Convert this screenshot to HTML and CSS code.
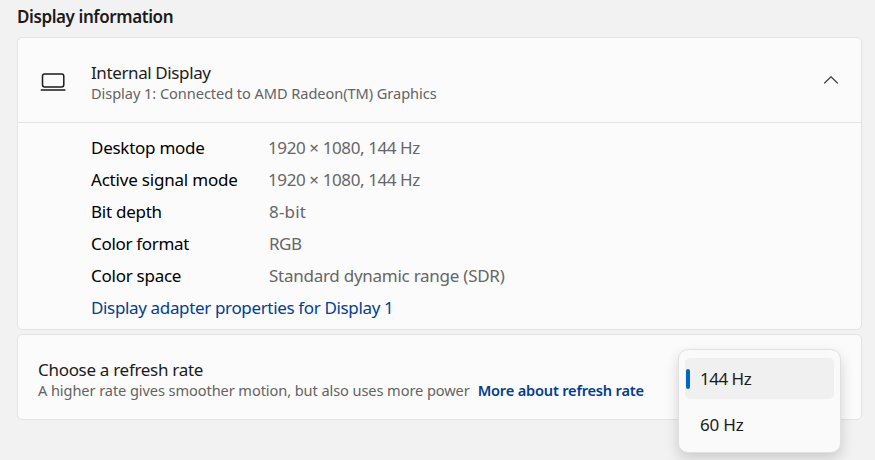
FILE: index.html
```html
<!DOCTYPE html>
<html lang="en">
<head>
<meta charset="utf-8">
<title>Advanced display</title>
<link rel="stylesheet" href="styles.css">
</head>
<body>
<main class="page">
  <h1 class="heading">Display information</h1>
  <section class="card">
    <header class="card-header">
      <svg class="laptop" width="26" height="20" viewBox="0 0 26 20" fill="none" stroke="#1b1b1b" stroke-width="1.5" stroke-linecap="round"><rect x="2.5" y="2" width="21.3" height="13" rx="2.2"/><path d="M1.3 18h23.6"/></svg>
      <div class="titles">
        <div class="title title-display">Internal Display</div>
        <div class="subtitle">Display 1: Connected to AMD Radeon(TM) Graphics</div>
      </div>
      <svg class="chevron" width="16" height="10" viewBox="0 0 16 10" fill="none" stroke="#404040" stroke-width="1.2" stroke-linecap="round" stroke-linejoin="round"><path d="M1.6 8 8 1.7 14.4 8"/></svg>
    </header>
    <div class="details">
      <dl class="specs">
        <dt>Desktop mode</dt><dd class="mode">1920 × 1080, 144 Hz</dd>
        <dt class="signal">Active signal mode</dt><dd class="mode">1920 × 1080, 144 Hz</dd>
        <dt>Bit depth</dt><dd class="depth">8-bit</dd>
        <dt class="format">Color format</dt><dd class="rgb">RGB</dd>
        <dt>Color space</dt><dd>Standard dynamic range (SDR)</dd>
      </dl>
      <a class="link adapter">Display adapter properties for Display 1</a>
    </div>
  </section>
  <section class="card rate">
    <div class="title">Choose a refresh rate</div>
    <div class="subtitle rate-note"><span>A higher rate gives smoother motion, but also uses more power</span><a class="link more">More about refresh rate</a></div>
    <div class="menu">
      <div class="option selected">144 Hz</div>
      <div class="option">60 Hz</div>
    </div>
  </section>
</main>
</body>
</html>
```
FILE: styles.css
```css
* { box-sizing: border-box; }
body {
  margin: 0;
  background: #f2f2f2;
  color: #1b1b1b;
  font-family: "Noto Sans", "Open Sans", sans-serif;
  font-size: 17px;
  overflow: hidden;
}
.page { height: 460px; padding: 5px 13px 0 17px; }
.heading { margin: 0 0 8px; font-size: 17px; line-height: 24px; font-weight: 600; letter-spacing: -0.41px; }
.card { border: 1px solid #e3e3e3; border-radius: 5px; background: #fbfbfb; }
.card-header { display: flex; align-items: center; height: 85px; padding: 0 22px; border-bottom: 1px solid #e3e3e3; }
.laptop { margin: 4px 25px 0 0; }
.titles { flex: 1; padding-top: 4px; }
.title { line-height: 22px; letter-spacing: -0.3px; }
.title-display { letter-spacing: -0.39px; }
.subtitle { font-size: 14.6px; line-height: 19px; color: #636363; letter-spacing: -0.065px; }
.details { height: 206px; padding: 9px 0 0 73px; color: #000; }
.specs { display: grid; grid-template-columns: 177px 1fr; grid-auto-rows: 32px; margin: 0; line-height: 32px; letter-spacing: -0.26px; }
.specs .signal { letter-spacing: -0.2px; }
.specs .format { letter-spacing: -0.32px; }
.specs dd { margin: 0; padding-left: 1px; color: #666; }
.specs .mode { padding-left: 0; letter-spacing: -0.4px; }
.specs .depth { letter-spacing: 0.2px; }
.specs .rgb { letter-spacing: -0.5px; }
.link { color: #003e92; line-height: 32px; }
.adapter { letter-spacing: -0.35px; }
.rate { position: relative; height: 86px; margin-top: 4px; padding: 24px 20px; }
.rate-note { display: flex; gap: 8px; letter-spacing: -0.09px; }
.more { font-weight: 600; line-height: 19px; letter-spacing: -0.19px; }
.menu { position: absolute; left: 660px; top: 14px; width: 163px; height: 104px; padding: 8px 6px; border: 1px solid #e0e0e0; border-radius: 10px; background: #fafafa; box-shadow: 0 6px 14px rgba(0,0,0,.16); }
.option { display: flex; align-items: center; height: 41px; margin-bottom: 5px; padding-left: 15px; border-radius: 5px; letter-spacing: -0.2px; }
.selected { position: relative; background: #f0f0f0; letter-spacing: -0.5px; }
.selected::before { content: ""; position: absolute; left: 1px; top: 11px; width: 4px; height: 20px; border-radius: 2px; background: #0067c0; }
```
